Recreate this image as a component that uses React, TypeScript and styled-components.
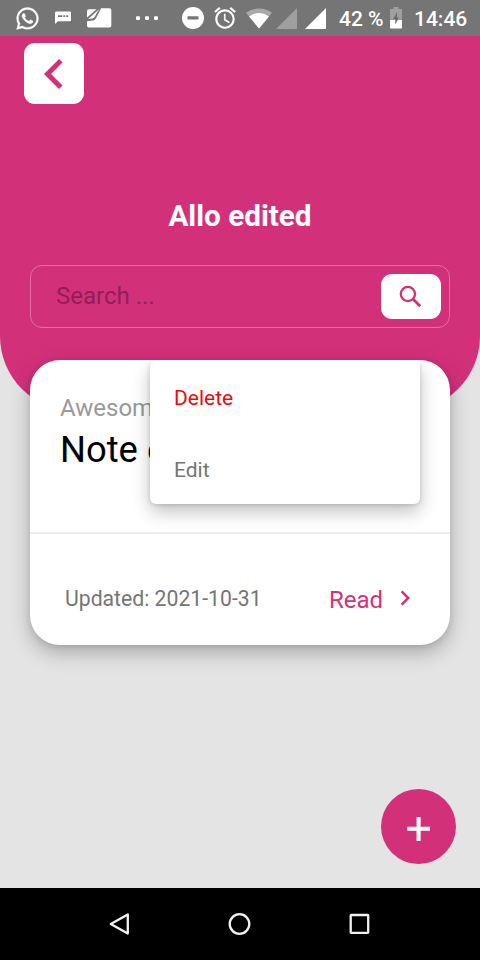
import React from "react";
import styled, { createGlobalStyle } from "styled-components";
import { FaWhatsapp } from "react-icons/fa";
import { MdAlarm, MdChevronLeft, MdChevronRight } from "react-icons/md";

const PINK = "#d3307a";

const GlobalStyle = createGlobalStyle`
  *, *::before, *::after { box-sizing: border-box; }
  body { margin: 0; font-family: Roboto, sans-serif; background: #e4e4e4; }
  button { font: inherit; border: 0; padding: 0; background: none; }
  svg { display: block; flex: none; }
`;

const Screen = styled.div`
  width: 480px;
  height: 960px;
  display: flex;
  flex-direction: column;
  background: #e4e4e4;
  overflow: hidden;
`;

const StatusBar = styled.div`
  height: 36px;
  flex: none;
  display: flex;
  align-items: center;
  background: #757575;
  color: #fff;
`;

const StatusItem = styled.span<{ $gap: number; $bold?: number }>`
  display: flex;
  flex: none;
  margin-left: ${(p) => p.$gap}px;

  svg {
    stroke-width: ${(p) => p.$bold ?? 0};
  }
`;

const StatusText = styled.span<{ $width: number; $gap: number }>`
  flex: none;
  width: ${(p) => p.$width}px;
  margin-left: ${(p) => p.$gap}px;
  padding-top: 2px;
  font-size: 21px;
  font-weight: 500;
  line-height: 24px;
  white-space: nowrap;
`;

const Header = styled.header`
  height: 375px;
  flex: none;
  padding: 7px 30px 0;
  background: ${PINK};
  border-radius: 0 0 75px 75px;
`;

const BackButton = styled.button`
  display: flex;
  align-items: center;
  justify-content: center;
  width: 60px;
  height: 61px;
  margin-left: -6px;
  border-radius: 11px;
  background: #fff;
  color: ${PINK};
`;

const Title = styled.h1`
  margin: 94px 0 0;
  height: 36px;
  line-height: 36px;
  font-size: 29.7px;
  font-weight: 700;
  text-align: center;
  color: #fff;
`;

const SearchBox = styled.div`
  display: flex;
  align-items: center;
  justify-content: space-between;
  height: 63px;
  margin-top: 31px;
  padding: 0 8px 0 25px;
  border: 1.5px solid #e26fa3;
  border-radius: 12px;
`;

const Placeholder = styled.span`
  padding-bottom: 2px;
  font-size: 24px;
  line-height: 30px;
  color: #8f2057;
`;

const SearchButton = styled.button`
  display: flex;
  align-items: center;
  justify-content: center;
  width: 60px;
  height: 45px;
  border-radius: 11px;
  background: #fff;
  color: ${PINK};
`;

const Content = styled.main`
  flex: 1;
  display: flex;
  flex-direction: column;
  margin-top: -51px;
  padding: 0 24px 24px 30px;
`;

const Card = styled.article`
  position: relative;
  width: 420px;
  height: 285px;
  flex: none;
  display: flex;
  flex-direction: column;
  border-radius: 30px;
  background: #fff;
  box-shadow: 0 8px 20px rgba(0, 0, 0, 0.26), 0 1px 6px rgba(0, 0, 0, 0.1);
`;

const CardBody = styled.div`
  height: 174px;
  padding: 33px 30px 0;
  border-bottom: 2px solid #ededed;
`;

const Category = styled.div`
  font-size: 24px;
  line-height: 30px;
  color: #999;
`;

const NoteTitle = styled.div`
  margin-top: 5px;
  font-size: 36.4px;
  line-height: 44px;
  color: #000;
`;

const CardFooter = styled.div`
  flex: 1;
  display: flex;
  align-items: center;
  justify-content: space-between;
  padding: 17px 30px 0 35px;
`;

const Updated = styled.span`
  padding-top: 1px;
  font-size: 21.2px;
  line-height: 28px;
  color: #757575;
`;

const ReadLink = styled.a`
  display: flex;
  align-items: center;
  gap: 7px;
  font-size: 24px;
  line-height: 32px;
  color: ${PINK};
`;

const ReadLabel = styled.span`
  padding-top: 3px;
`;

const Menu = styled.div`
  position: absolute;
  top: 0;
  left: 120px;
  width: 270px;
  height: 144px;
  border-radius: 6px;
  background: #fff;
  box-shadow: 0 8px 18px rgba(0, 0, 0, 0.24), 0 1px 4px rgba(0, 0, 0, 0.14);
  clip-path: inset(0 -30px -40px -30px);
`;

const MenuItem = styled.div<{ $danger?: boolean }>`
  height: 72px;
  padding: 4px 24px 0;
  font-size: 21px;
  line-height: 68px;
  color: ${(p) => (p.$danger ? "#ee0808" : "#757575")};
`;

const Fab = styled.button`
  display: flex;
  align-items: center;
  justify-content: center;
  width: 75px;
  height: 75px;
  margin: auto 0 0 auto;
  padding-top: 5px;
  border-radius: 50%;
  background: ${PINK};
  color: #fff;
`;

const NavBar = styled.nav`
  height: 72px;
  flex: none;
  display: flex;
  align-items: center;
  justify-content: center;
  gap: 96px;
  background: #000;
`;

const MessageIcon = () => (
  <svg width="16" height="14" viewBox="0 0 16 14">
    <path
      fill="#fff"
      fillRule="evenodd"
      d="M1.2 .5H14.8Q16 .5 16 1.7V9Q16 10.2 14.8 10.2H3L0 13V1.7Q0 .5 1.2 .5ZM3 4.3V6H7.3V4.3ZM8.3 4.3V6H10.2V4.3ZM11.2 4.3V6H13.2V4.3Z"
    />
  </svg>
);

const CardsIcon = () => (
  <svg width="25" height="20" viewBox="0 0 25 20">
    <path
      fill="#fff"
      d="M14.2 .3H22.5Q24.3 .3 24.3 2.1V17.7Q24.3 19.5 22.5 19.5H1.8Q0 19.5 0 17.7V13.2L6.3 12.4Q8 12 9 10.2Z"
    />
    <path fill="#fff" d="M2 1.3H9.5L0 9.6V3.3Q0 1.3 2 1.3Z" />
    <path fill="#fff" d="M12.3 1L7.4 9.3Q6.8 10.3 5.4 10.5L1.2 11Z" />
  </svg>
);

const MoreIcon = () => (
  <svg width="24" height="6" viewBox="0 0 24 6" fill="#fff">
    <rect x="1" y="1.2" width="4" height="3.8" rx="1" />
    <rect x="10" y="1.2" width="4" height="3.8" rx="1" />
    <rect x="19" y="1.2" width="4" height="3.8" rx="1" />
  </svg>
);

const DoNotDisturbIcon = () => (
  <svg width="22" height="22" viewBox="0 0 22 22">
    <circle cx="11" cy="11" r="11" fill="#fff" />
    <rect x="5.5" y="9.2" width="11" height="3.4" rx=".5" fill="#757575" />
  </svg>
);

const WifiIcon = () => (
  <svg width="26" height="21" viewBox="0 0 26 21">
    <path fill="#a9a9a9" d="M0 4.8Q13-3.6 26 4.8L13 20.5Z" />
    <path fill="#fff" d="M3 8.4Q13 1.6 23 8.4L13 20.5Z" />
  </svg>
);

const SignalIcon = ({ color }: { color: string }) => (
  <svg width="21" height="21" viewBox="0 0 21 21">
    <path fill={color} d="M21 0V21H0Z" />
  </svg>
);

const BatteryIcon = () => (
  <svg width="12" height="22" viewBox="0 0 12 22">
    <path fill="#a0a0a0" d="M3.5 0H8.5V2H11Q12 2 12 3V14H0V3Q0 2 1 2H3.5Z" />
    <path fill="#fff" d="M0 13H12V20.5Q12 21.5 11 21.5H1Q0 21.5 0 20.5Z" />
    <path fill="#6b6b6b" d="M7 5L3 12.3H5.3V17.5L9 10.5H7Z" />
  </svg>
);

const SearchIcon = () => (
  <svg width="30" height="30" viewBox="0 0 30 30" fill="none" stroke="currentColor">
    <circle cx="11.9" cy="12" r="7.1" strokeWidth="2.3" />
    <path d="M17 17.1L24.2 24.3" strokeWidth="2.8" />
  </svg>
);

const PlusIcon = () => (
  <svg width="24" height="24" viewBox="0 0 24 24" stroke="currentColor" strokeWidth="4.1">
    <path d="M11.6 0V24M.3 11.7H23" />
  </svg>
);

const NavBackIcon = () => (
  <svg width="24" height="24" viewBox="0 0 24 24" fill="none" stroke="#f2f2f2" strokeWidth="2.3">
    <path d="M19.8 2.4V21.6L2.8 12Z" strokeLinejoin="round" />
  </svg>
);

const NavHomeIcon = () => (
  <svg width="24" height="24" viewBox="0 0 24 24" fill="none" stroke="#f2f2f2" strokeWidth="2.3">
    <circle cx="11.5" cy="12" r="9.8" />
  </svg>
);

const NavRecentsIcon = () => (
  <svg width="24" height="24" viewBox="0 0 24 24" fill="none" stroke="#f2f2f2" strokeWidth="2.3">
    <rect x="2.7" y="3" width="17.5" height="17.8" rx=".5" />
  </svg>
);

export default function App() {
  return (
    <>
      <GlobalStyle />
      <Screen>
        <StatusBar>
          <StatusItem $gap={15} $bold={7}><FaWhatsapp size={25} /></StatusItem>
          <StatusItem $gap={15}><MessageIcon /></StatusItem>
          <StatusItem $gap={16}><CardsIcon /></StatusItem>
          <StatusItem $gap={23}><MoreIcon /></StatusItem>
          <StatusItem $gap={23}><DoNotDisturbIcon /></StatusItem>
          <StatusItem $gap={8}><MdAlarm size={26} /></StatusItem>
          <StatusItem $gap={8}><WifiIcon /></StatusItem>
          <StatusItem $gap={4}><SignalIcon color="#9f9f9f" /></StatusItem>
          <StatusItem $gap={8}><SignalIcon color="#fff" /></StatusItem>
          <StatusText $gap={13} $width={46}>42 %</StatusText>
          <StatusItem $gap={5}><BatteryIcon /></StatusItem>
          <StatusText $gap={12} $width={56}>14:46</StatusText>
        </StatusBar>
        <Header>
          <BackButton aria-label="Back"><MdChevronLeft size={60} /></BackButton>
          <Title>Allo edited</Title>
          <SearchBox>
            <Placeholder>Search ...</Placeholder>
            <SearchButton aria-label="Search"><SearchIcon /></SearchButton>
          </SearchBox>
        </Header>
        <Content>
          <Card>
            <CardBody>
              <Category>Awesom</Category>
              <NoteTitle>Note e</NoteTitle>
            </CardBody>
            <CardFooter>
              <Updated>Updated: 2021-10-31</Updated>
              <ReadLink>
                <ReadLabel>Read</ReadLabel>
                <MdChevronRight size={30} />
              </ReadLink>
            </CardFooter>
            <Menu>
              <MenuItem $danger>Delete</MenuItem>
              <MenuItem>Edit</MenuItem>
            </Menu>
          </Card>
          <Fab aria-label="Add"><PlusIcon /></Fab>
        </Content>
        <NavBar>
          <NavBackIcon />
          <NavHomeIcon />
          <NavRecentsIcon />
        </NavBar>
      </Screen>
    </>
  );
}
